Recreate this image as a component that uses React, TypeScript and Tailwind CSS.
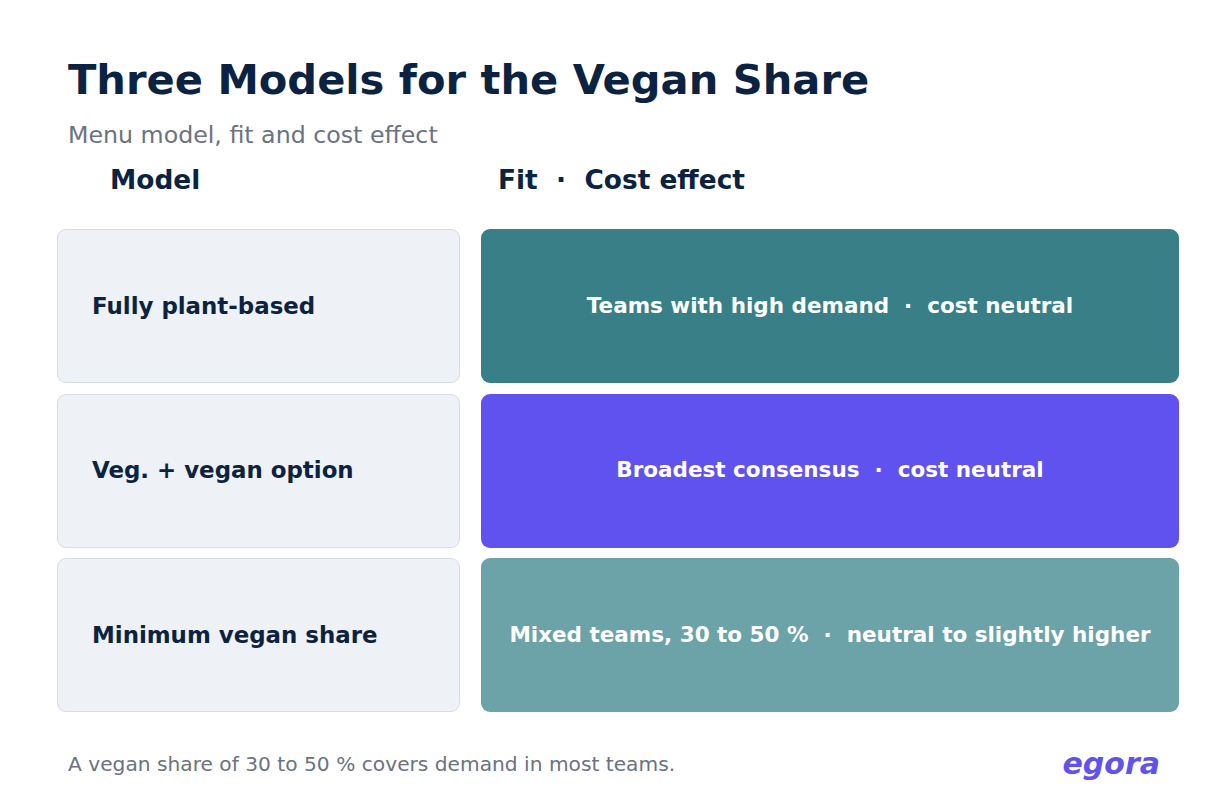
const rows = [
  {
    model: "Fully plant-based",
    fit: "Teams with high demand",
    cost: "cost neutral",
    tone: "bg-[#387f87]",
  },
  {
    model: "Veg. + vegan option",
    fit: "Broadest consensus",
    cost: "cost neutral",
    tone: "bg-[#5f52ef]",
  },
  {
    model: "Minimum vegan share",
    fit: "Mixed teams, 30 to 50 %",
    cost: "neutral to slightly higher",
    tone: "bg-[#6ba3a8]",
  },
];

export default function App() {
  return (
    <div className="w-[1230px] h-[800px] bg-white overflow-hidden font-['DejaVu_Sans',sans-serif] text-[#0b2340]">
      {/* Title block */}
      <div className="pl-[68px] pt-[56px]">
        <h1 className="text-[41.6px] font-bold leading-[48px]">Three Models for the Vegan Share</h1>
        <p className="mt-[17px] text-[23.7px] leading-[28px] text-[#6b7280]">Menu model, fit and cost effect</p>
      </div>

      {/* Column headers */}
      <div className="flex mt-[15px] text-[26.4px] font-bold leading-[32px]">
        <div className="w-[498px] pl-[110px]">Model</div>
        <div className="whitespace-pre">Fit  ·  Cost effect</div>
      </div>

      {/* Rows */}
      <div className="mt-[33px] pl-[57px] pr-[51px] flex flex-col gap-[10.5px]">
        {rows.map((r) => (
          <div key={r.model} className="flex gap-[21px] h-[154px]">
            <div className="w-[403px] shrink-0 rounded-[9px] bg-[#eef1f6] border-[1.5px] border-[#d6dce6] flex items-center pl-[34px]">
              <span className="text-[22.9px] font-bold">{r.model}</span>
            </div>
            <div className={`flex-1 rounded-[9px] ${r.tone} flex items-center justify-center`}>
              <span className="whitespace-pre text-white text-[21.5px] font-bold">
                {r.fit}  ·  {r.cost}
              </span>
            </div>
          </div>
        ))}
      </div>

      {/* Footer */}
      <div className="flex items-center justify-between pl-[68px] pr-[70px] mt-[34px] h-[36px]">
        <p className="text-[20.2px] text-[#6b7280]">A vegan share of 30 to 50 % covers demand in most teams.</p>
        <span className="text-[30px] leading-[36px] font-bold italic text-[#5f52ef]">egora</span>
      </div>
    </div>
  );
}
